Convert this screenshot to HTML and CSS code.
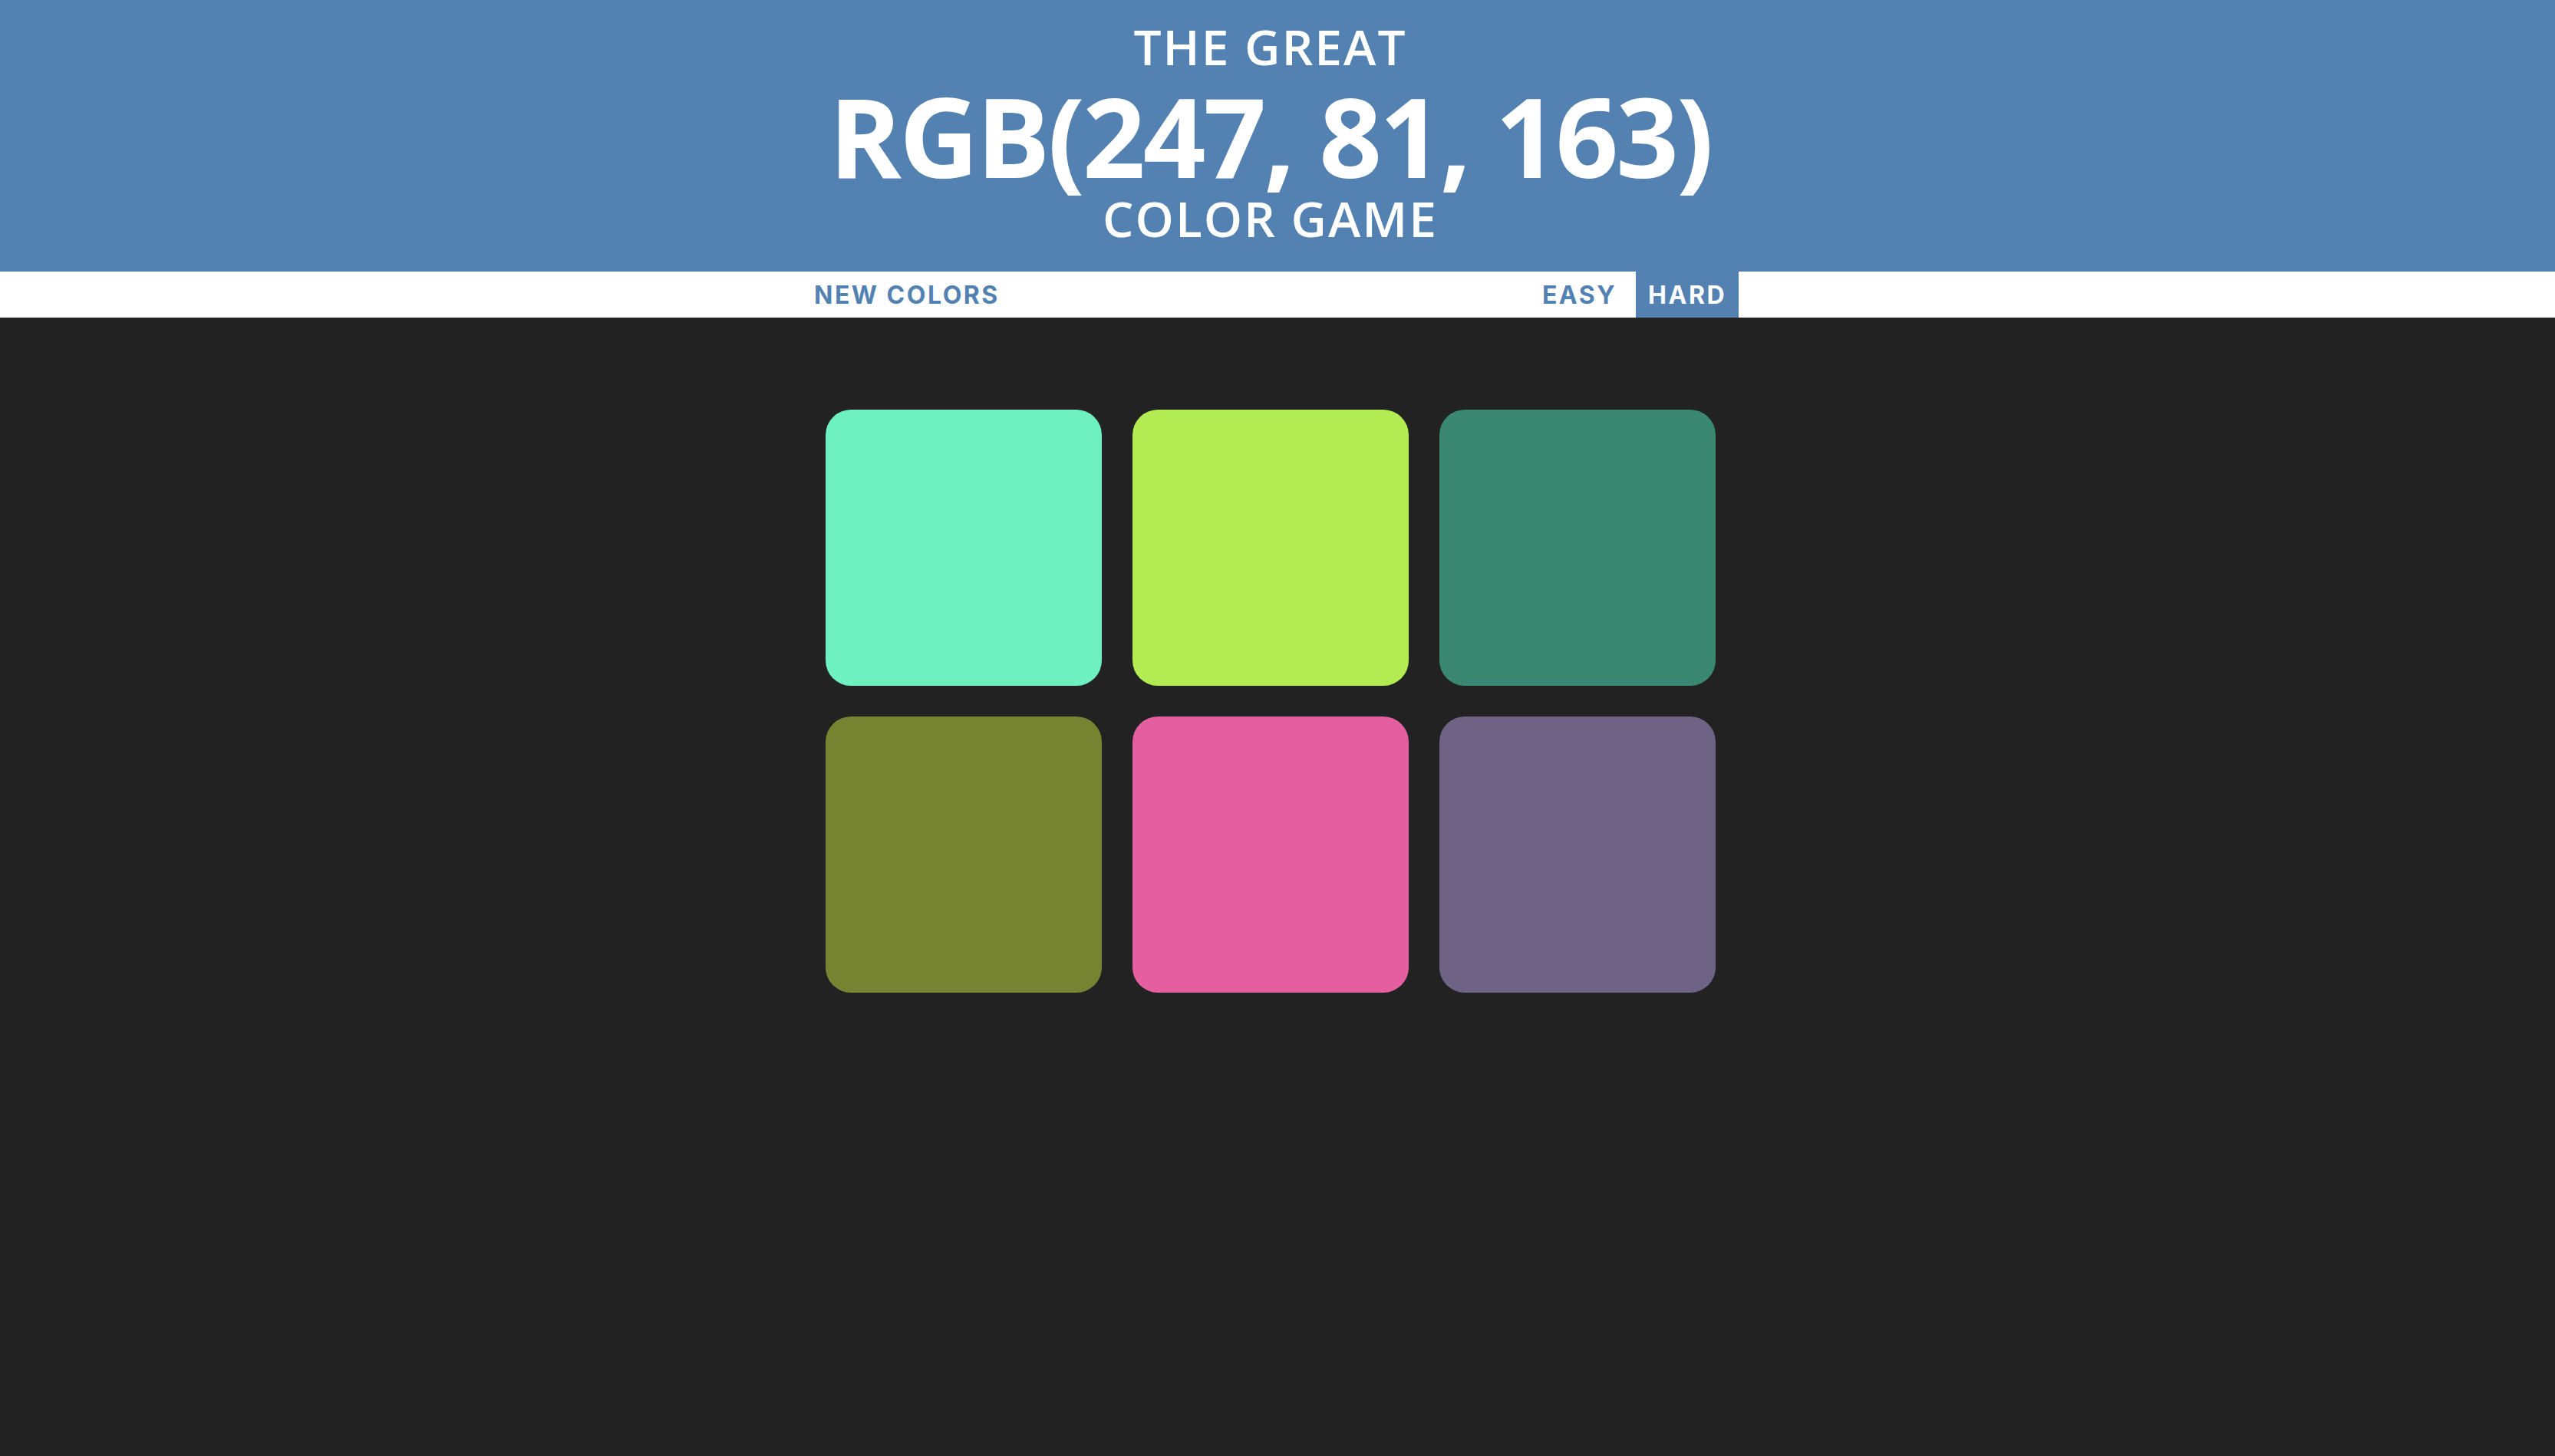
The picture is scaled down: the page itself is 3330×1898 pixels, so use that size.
FILE: index.html
```html
<!DOCTYPE html>
<html lang="en">
<head>
<meta charset="utf-8">
<title>Color Game</title>
<link rel="stylesheet" href="styles.css">
</head>
<body>
  <header class="banner">
    <h1 class="title">
      <span class="title-top">The Great</span>
      <span class="title-rgb">RGB(247, 81, 163)</span>
      <span class="title-bottom">Color Game</span>
    </h1>
  </header>
  <nav class="stripe">
    <div class="stripe-inner">
      <button class="btn">New Colors</button>
      <span class="message"></span>
      <div class="modes">
        <button class="btn">Easy</button>
        <button class="btn selected">Hard</button>
      </div>
    </div>
  </nav>
  <main class="board">
    <div class="grid">
      <div class="square sq-teal"></div>
      <div class="square sq-lime"></div>
      <div class="square sq-green"></div>
      <div class="square sq-olive"></div>
      <div class="square sq-pink"></div>
      <div class="square sq-purple"></div>
    </div>
  </main>
</body>
</html>
```

FILE: styles.css
```css
html, body {
  margin: 0;
  padding: 0;
}

body {
  background: #222222;
  min-height: 100vh;
}

.banner {
  background: #5382b2;
  color: #ffffff;
  text-align: center;
  padding: 29px 19px 37px 0;
}

.title {
  margin: 0;
  font-family: "Open Sans", "DejaVu Sans", sans-serif;
  font-weight: 400;
  text-transform: uppercase;
}

.title-top,
.title-bottom {
  display: block;
  font-size: 64px;
  line-height: 64px;
  font-weight: 600;
  letter-spacing: 2px;
}

.title-rgb {
  display: block;
  margin-top: 12px;
  margin-bottom: 5px;
  font-size: 143px;
  line-height: 143px;
  font-weight: 700;
  letter-spacing: -3px;
}

.stripe {
  background: #ffffff;
  height: 60px;
  padding-right: 19px;
}

.stripe-inner {
  width: 1221px;
  height: 60px;
  margin: 0 auto;
  display: flex;
  align-items: stretch;
}

.message {
  flex: 1;
}

.modes {
  display: flex;
  gap: 9px;
}

.btn {
  border: none;
  background: none;
  margin: 0;
  padding: 0 16px;
  height: 60px;
  font-family: "Inter", "Roboto", sans-serif;
  font-weight: 700;
  font-size: 32px;
  letter-spacing: 2.5px;
  text-transform: uppercase;
  color: #5382b2;
  cursor: pointer;
}

.btn.selected {
  background: #5382b2;
  color: #ffffff;
}

.board {
  padding: 120px 19px 0 0;
}

.grid {
  width: 1160px;
  margin: 0 auto;
  display: grid;
  grid-template-columns: repeat(3, 360px);
  gap: 40px;
}

.square {
  height: 360px;
  border-radius: 33px;
}

.sq-teal { background: #6ef0c0; }
.sq-lime { background: #b3ec52; }
.sq-green { background: #3a8872; }
.sq-olive { background: #768331; }
.sq-pink { background: #e55fa0; }
.sq-purple { background: #6e6384; }
```
